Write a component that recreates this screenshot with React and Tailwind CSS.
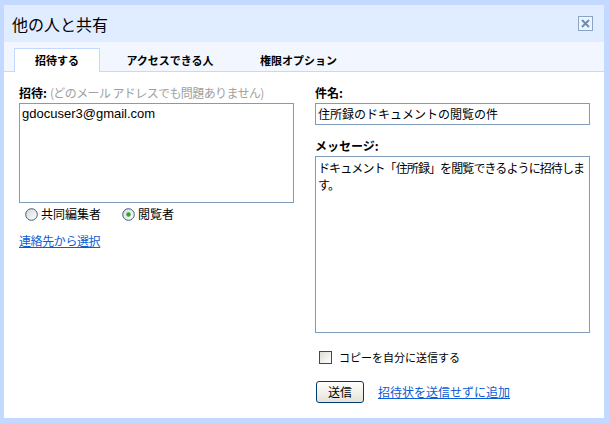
import { useState } from 'react'

const jp = { fontFamily: '"Noto Sans CJK JP", "Liberation Sans", sans-serif' }

const CloseBox = () => (
  <button className="w-[15px] h-[15px] border border-[#8aa4c6] bg-[#eef4ff] flex items-center justify-center">
    <svg width="11" height="11" viewBox="0 0 11 11">
      <path d="M2 2 L9 9 M9 2 L2 9" stroke="#6b8db9" strokeWidth="2" />
    </svg>
  </button>
)

const Radio = ({ checked }) => (
  <svg width="13" height="13" viewBox="0 0 13 13" className="shrink-0">
    <defs>
      <linearGradient id={checked ? 'rg1' : 'rg0'} x1="0" y1="0" x2="1" y2="1">
        <stop offset="0" stopColor="#d6d6d0" />
        <stop offset="1" stopColor="#ffffff" />
      </linearGradient>
    </defs>
    <circle cx="6.5" cy="6.5" r="5.8" fill={`url(#${checked ? 'rg1' : 'rg0'})`} stroke="#3c5c84" strokeWidth="1" />
    {checked && <circle cx="6.5" cy="6.5" r="2.2" fill="#2fa52f" />}
  </svg>
)

const tabs = [
  { label: '招待する', w: 'w-[86px]' },
  { label: 'アクセスできる人', w: 'w-[124px]' },
  { label: '権限オプション', w: 'w-[117px]' },
]

export default function App() {
  const [role, setRole] = useState('viewer')
  const [active] = useState(0)

  return (
    <div className="w-[609px] h-[423px] bg-[#c3d9ff] pt-[5px] pl-[4px] pr-[5px] pb-[5px]" style={jp}>
      <div className="w-full h-full bg-white flex flex-col">
        {/* header */}
        <div className="h-[37px] bg-[#e0ecff] flex items-center justify-between pl-[8px] pr-[11px]">
          <span className="text-[16px] leading-[18px] text-black">他の人と共有</span>
          <CloseBox />
        </div>

        {/* tabs */}
        <div className="h-[30px] bg-[#f1f6ff] border-b border-[#c3d9ff] flex items-end gap-[8px] pl-[10px]">
          {tabs.map((t, i) => (
            <div
              key={t.label}
              className={`${t.w} h-[24px] -mb-px flex items-center justify-center text-[11px] font-bold text-black ${
                i === active ? 'bg-white border border-b-0 border-[#c3d9ff]' : ''
              }`}
            >
              {t.label}
            </div>
          ))}
        </div>

        {/* body */}
        <div className="flex gap-[21px] pl-[15px] pt-[13px]">
          {/* left */}
          <div className="w-[275px] flex flex-col">
            <div className="h-[16px] flex items-center text-[12px] leading-[16px] whitespace-nowrap">
              <span className="font-bold text-black">招待:</span>
              <span className="ml-[3px] text-[#a0a0a0] tracking-[-0.6px]">(どのメール アドレスでも問題ありません)</span>
            </div>
            <div
              className="mt-[2px] h-[100px] border border-[#7f9db9] px-[2px] pt-[2px] text-[13px] leading-[16px] text-black"
              style={{ fontFamily: '"Liberation Sans", Arial, sans-serif' }}
            >
              gdocuser3@gmail.com
            </div>
            <div className="h-[22px] flex items-center pl-[6px] text-[12px] text-black">
              <label className="flex items-center gap-[3px] cursor-pointer" onClick={() => setRole('editor')}>
                <Radio checked={role === 'editor'} />
                <span>共同編集者</span>
              </label>
              <label className="flex items-center gap-[3px] ml-[21px] cursor-pointer" onClick={() => setRole('viewer')}>
                <Radio checked={role === 'viewer'} />
                <span>閲覧者</span>
              </label>
            </div>
            <a href="#" className="mt-[8px] h-[16px] leading-[16px] text-[12px] text-[#0b5cd5] underline w-fit tracking-[-0.4px]">
              連絡先から選択
            </a>
          </div>

          {/* right */}
          <div className="w-[275px] flex flex-col">
            <div className="h-[16px] leading-[16px] text-[12px] font-bold text-black">件名:</div>
            <div className="mt-[2px] h-[22px] border border-[#7f9db9] px-[2px] flex items-center text-[12px] text-black whitespace-nowrap overflow-hidden">
              住所録のドキュメントの閲覧の件
            </div>
            <div className="mt-[13px] h-[16px] leading-[16px] text-[12px] font-bold text-black">メッセージ:</div>
            <div className="mt-[2px] h-[177px] border border-[#7f9db9] px-[2px] pt-[2px] text-[12px] leading-[17px] text-black tracking-[-0.9px]">
              <div className="whitespace-nowrap">ドキュメント「住所録」を閲覧できるように招待しま</div>
              <div>す。</div>
            </div>
            <label className="mt-[16px] h-[16px] flex items-center pl-[4px] gap-[7px] cursor-pointer">
              <span className="w-[13px] h-[13px] border border-[#1c5180] bg-gradient-to-br from-[#dcdcd7] to-white shrink-0" />
              <span className="text-[11px] text-black">コピーを自分に送信する</span>
            </label>
            <div className="mt-[16px] flex items-center">
              <button className="ml-[1px] w-[48px] h-[22px] border border-[#003c74] rounded-[3px] bg-gradient-to-b from-white to-[#e6e3d6] text-[12px] text-black flex items-center justify-center">
                送信
              </button>
              <a href="#" className="ml-[14px] text-[12px] leading-[16px] text-[#0b5cd5] underline">
                招待状を送信せずに追加
              </a>
            </div>
          </div>
        </div>
      </div>
    </div>
  )
}
